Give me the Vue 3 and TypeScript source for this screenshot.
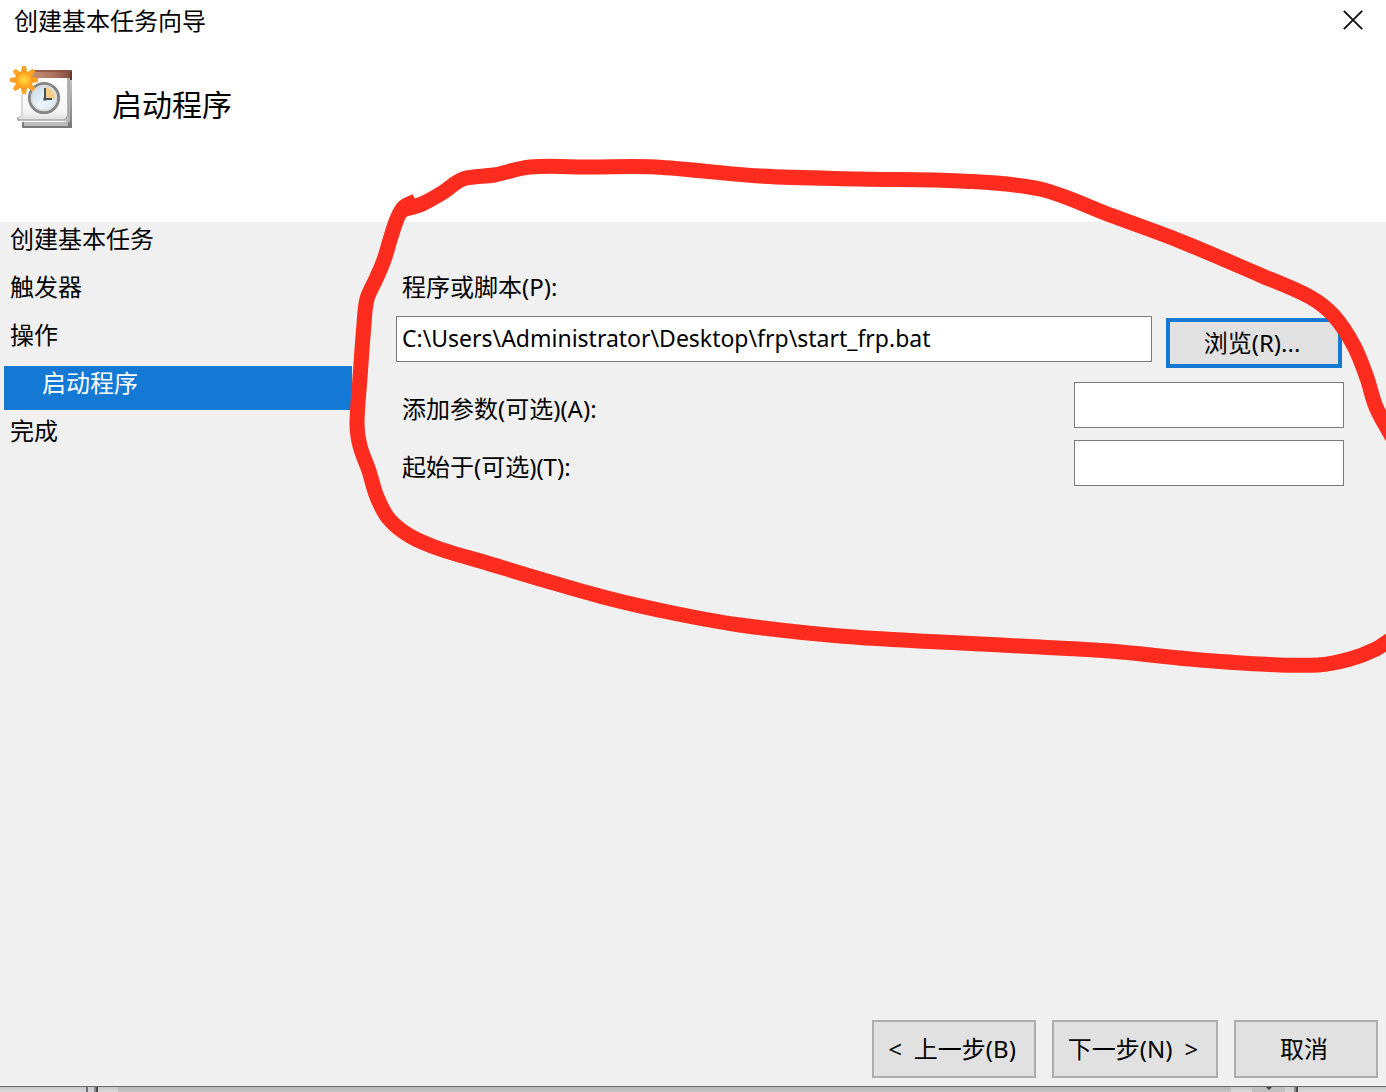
<script setup lang="ts">
import { ref } from 'vue'

interface Step {
  label: string
  current?: boolean
}

type Point = [number, number]

const steps: Step[] = [
  { label: '创建基本任务' },
  { label: '触发器' },
  { label: '操作' },
  { label: '启动程序', current: true },
  { label: '完成' },
]

const program = ref('C:\\Users\\Administrator\\Desktop\\frp\\start_frp.bat')
const args = ref('')
const startIn = ref('')

const sunRays = [0, 45, 90, 135, 180, 225, 270, 315]

// Centre line of the hand-drawn marker, in drawing order.
const markerPoints: Point[][] = [
  [
    [416, 201], [404, 207], [397, 219], [390, 240], [384, 260], [376, 279], [367, 299],
    [364, 324], [360, 378], [357, 424], [360, 446], [369, 471], [377, 497],
    [389, 519], [410, 536], [440, 549], [487, 563], [540, 579], [607, 598],
    [673, 613], [740, 625], [840, 636], [940, 642], [1040, 647], [1110, 651],
    [1190, 659], [1260, 664], [1318, 665], [1350, 659], [1376, 649], [1396, 636],
  ],
  [
    [403, 210], [422, 204], [442, 193], [463, 179], [494, 175], [530, 167],
    [590, 167], [655, 167], [760, 176], [860, 179], [960, 181], [1040, 189], [1110, 215],
    [1180, 241], [1260, 275], [1310, 297], [1334, 316], [1354, 346],
    [1367, 378], [1376, 407], [1392, 437],
  ],
]

// Catmull-Rom spline through the points, written as cubic Béziers.
function smooth(points: Point[]): string {
  let d = `M${points[0][0]} ${points[0][1]}`
  for (let i = 0; i < points.length - 1; i++) {
    const a = points[Math.max(i - 1, 0)]
    const b = points[i]
    const c = points[i + 1]
    const e = points[Math.min(i + 2, points.length - 1)]
    const len = Math.hypot(c[0] - b[0], c[1] - b[1])
    const t1 = Math.hypot(c[0] - a[0], c[1] - a[1])
    const t2 = Math.hypot(e[0] - b[0], e[1] - b[1])
    const k = len / 3
    d += ` C${b[0] + ((c[0] - a[0]) / t1) * k} ${b[1] + ((c[1] - a[1]) / t1) * k}`
    d += ` ${c[0] - ((e[0] - b[0]) / t2) * k} ${c[1] - ((e[1] - b[1]) / t2) * k}`
    d += ` ${c[0]} ${c[1]}`
  }
  return d
}

const markerPaths = markerPoints.map(smooth)
</script>

<template>
  <div class="screen">
    <section class="dialog" aria-label="创建基本任务向导">
      <header class="head">
        <div class="titlebar">
          <span class="title">创建基本任务向导</span>
          <button type="button" class="close" aria-label="关闭">
            <svg width="20" height="20" viewBox="0 0 20 20" aria-hidden="true">
              <path d="M.8 .8L19.2 19.2M19.2 .8L.8 19.2" stroke="#111" stroke-width="1.9" />
            </svg>
          </button>
        </div>
        <div class="banner">
          <svg class="task-icon" width="64" height="64" viewBox="0 0 64 64" aria-hidden="true">
            <defs>
              <linearGradient id="paper" x1="0" y1="0" x2="0" y2="1">
                <stop offset="0" stop-color="#fff" />
                <stop offset=".8" stop-color="#f6f6f6" />
                <stop offset="1" stop-color="#dedede" />
              </linearGradient>
              <linearGradient id="edge" x1="0" y1="0" x2="0" y2="1">
                <stop offset="0" stop-color="#c9c9c9" />
                <stop offset="1" stop-color="#777" />
              </linearGradient>
              <linearGradient id="strap" x1="0" y1="0" x2="1" y2="0">
                <stop offset="0" stop-color="#c98e78" />
                <stop offset=".6" stop-color="#a9705c" />
                <stop offset="1" stop-color="#7d4a3b" />
              </linearGradient>
              <linearGradient id="face" x1="0" y1="0" x2="1" y2="1">
                <stop offset="0" stop-color="#b9cfe4" />
                <stop offset=".55" stop-color="#eef5fb" />
                <stop offset="1" stop-color="#cfdfee" />
              </linearGradient>
              <radialGradient id="sun">
                <stop offset="0" stop-color="#ffd83c" />
                <stop offset=".6" stop-color="#ffb52a" />
                <stop offset="1" stop-color="#f8931c" />
              </radialGradient>
            </defs>
            <path d="M12 56h46V10h4v52H12z" fill="url(#edge)" />
            <path d="M14 56h44v4H14z" fill="#bdbdbd" />
            <path d="M56 10h4v46h-4z" fill="#b5b5b5" />
            <path d="M12 8h46v44l-2 2H8v-2l4-2z" fill="url(#paper)" />
            <path d="M8 51v3h47l3-4V12" fill="none" stroke="#a6a6a6" stroke-width="1.6" />
            <path d="M12 28v22l-4 2" fill="none" stroke="#ccc" stroke-width="1.4" />
            <path d="M20 4h42v10h-2v-2H20z" fill="url(#strap)" />
            <path d="M22 5h38" stroke="#87533f" stroke-width="1.6" />
            <path d="M60 6h2v8h-2z" fill="#6b3528" />
            <circle cx="34" cy="32" r="14.6" fill="url(#face)" stroke="#858585" stroke-width="3" />
            <circle cx="34" cy="32" r="12.4" fill="none" stroke="#dadada" stroke-width="1.6" />
            <path d="M35 33V21a11 11 0 0 1 10 12z" fill="#f4cd86" />
            <path d="M35 22v11h7" fill="none" stroke="#44525e" stroke-width="2" />
            <circle cx="35" cy="33" r="1.8" fill="#44525e" />
            <path
              v-for="angle in sunRays"
              :key="angle"
              d="M11 6L12 0h4l1 6z"
              fill="#fba324"
              :transform="`rotate(${angle} 14 14)`"
            />
            <circle cx="14" cy="14" r="9" fill="url(#sun)" />
          </svg>
          <h1 class="heading">启动程序</h1>
        </div>
      </header>

      <div class="body">
        <nav class="steps" aria-label="向导步骤">
          <ol>
            <li
              v-for="step in steps"
              :key="step.label"
              :class="{ current: step.current }"
              :aria-current="step.current ? 'step' : undefined"
            >
              {{ step.label }}
            </li>
          </ol>
        </nav>

        <form class="form" @submit.prevent>
          <label class="label" for="program">程序或脚本(P):</label>
          <div class="program-row">
            <input id="program" v-model="program" type="text" class="field grow" spellcheck="false" />
            <button type="button" class="button browse">浏览(R)...</button>
          </div>
          <div class="option-row">
            <label class="label" for="args">添加参数(可选)(A):</label>
            <input id="args" v-model="args" type="text" class="field short" />
          </div>
          <div class="option-row">
            <label class="label" for="start-in">起始于(可选)(T):</label>
            <input id="start-in" v-model="startIn" type="text" class="field short" />
          </div>
        </form>
      </div>

      <footer class="foot">
        <button type="button" class="button back"><span>&lt;</span><span>上一步(B)</span></button>
        <button type="button" class="button next"><span>下一步(N)</span><span>&gt;</span></button>
        <button type="button" class="button cancel">取消</button>
      </footer>
    </section>

    <!-- Sliver of the window lying behind the dialog -->
    <div class="behind" aria-hidden="true">
      <span class="pane left"></span>
      <span class="bar thin"></span>
      <span class="pane gap"></span>
      <span class="bar thick"></span>
      <span class="pane inset"></span>
      <span class="pane mid"></span>
      <span class="pane track"></span>
      <span class="pane scroll"><i class="arrow"></i></span>
      <span class="pane gutter"></span>
      <span class="bar thick"></span>
      <span class="pane right"></span>
    </div>

    <svg class="marker" viewBox="0 0 1386 1092" aria-hidden="true">
      <path v-for="(d, i) in markerPaths" :key="i" :d="d" />
    </svg>
  </div>
</template>

<style>
body {
  margin: 0;
  background: #f0f0f0;
}
</style>

<style scoped>
.screen {
  position: relative;
  display: flex;
  flex-direction: column;
  min-height: 100vh;
  overflow: hidden;
  font-family: 'Noto Sans', 'Noto Sans CJK SC', sans-serif;
  font-size: 24px;
  line-height: 34px;
  color: #000;
}

.dialog {
  flex: 1;
  display: flex;
  flex-direction: column;
  background: #f0f0f0;
  border-bottom: 1px solid #6b6b6b;
}

.head {
  box-sizing: border-box;
  height: 222px;
  background: #fff;
}

.titlebar {
  display: flex;
  justify-content: space-between;
  align-items: center;
  height: 40px;
  padding: 0 20px 0 14px;
}

.title {
  padding-top: 2px;
}

.close {
  display: flex;
  align-items: center;
  justify-content: center;
  padding: 3px;
  border: 0;
  background: none;
}

.banner {
  display: flex;
  align-items: center;
  gap: 38px;
  padding: 26px 10px 0;
}

.heading {
  margin: 0;
  padding-top: 14px;
  font-size: 30px;
  line-height: 40px;
  font-weight: 400;
}

.body {
  flex: 1;
  display: flex;
}

.steps {
  flex: none;
  width: 352px;
}

.steps ol {
  display: flex;
  flex-direction: column;
  gap: 4px;
  margin: 0;
  padding: 0 0 0 4px;
  list-style: none;
}

.steps li {
  padding: 0 6px 10px;
}

.steps li.current {
  padding-left: 38px;
  background: #1379d5;
  color: #fff;
}

.form {
  flex: 1;
  display: flex;
  flex-direction: column;
  padding: 48px 42px 0 44px;
}

.label {
  padding-left: 6px;
}

.program-row {
  display: flex;
  gap: 14px;
  padding: 12px 2px 14px 0;
}

.field {
  box-sizing: border-box;
  height: 46px;
  margin: 0;
  padding: 0 5px 2px;
  border: 1px solid #7a7a7a;
  border-radius: 0;
  background: #fff;
  color: #000;
  font: inherit;
  font-size: 23px;
  outline: none;
}

.grow {
  flex: 1;
  min-width: 0;
}

.short {
  width: 270px;
}

.option-row {
  display: flex;
  justify-content: space-between;
  align-items: center;
  margin-bottom: 12px;
}

.option-row .label {
  padding-top: 8px;
}

.button {
  box-sizing: border-box;
  display: flex;
  align-items: center;
  justify-content: center;
  gap: 12px;
  height: 58px;
  margin: 0;
  padding: 0 4px 0 0;
  border: 2px solid #adadad;
  border-radius: 0;
  background: #e1e1e1;
  color: #000;
  font: inherit;
  white-space: nowrap;
}

.browse {
  width: 176px;
  height: 50px;
  margin-top: 2px;
  border: 4px solid #1379d5;
}

.foot {
  display: flex;
  justify-content: flex-end;
  gap: 16px;
  padding: 0 8px 8px;
}

.back {
  width: 164px;
}

.next {
  width: 166px;
}

.cancel {
  width: 144px;
}

.behind {
  display: flex;
  height: 5px;
}

.pane {
  background: linear-gradient(#c6c6c6, #dcdcdc);
}

.left {
  width: 86px;
}

.gap {
  width: 6px;
}

.inset {
  width: 20px;
}

.mid {
  flex: 1;
  background: linear-gradient(#b4b4b4, #c8c8c8);
}

.track {
  width: 21px;
}

.scroll {
  display: flex;
  justify-content: center;
  width: 33px;
  background: #c0c0c0;
}

.arrow {
  width: 0;
  height: 0;
  border: 3px solid transparent;
  border-top-color: #444;
}

.gutter {
  width: 9px;
}

.right {
  width: 88px;
}

.bar {
  background: #6c7076;
}

.thin {
  width: 2px;
}

.thick {
  width: 4px;
  background: linear-gradient(90deg, #8a8a8a 50%, #484848 50%);
}

.marker {
  position: absolute;
  top: 0;
  left: 0;
  width: 100%;
  pointer-events: none;
}

.marker path {
  fill: none;
  stroke: #fd2c1e;
  stroke-width: 15;
  stroke-linejoin: round;
}
</style>
